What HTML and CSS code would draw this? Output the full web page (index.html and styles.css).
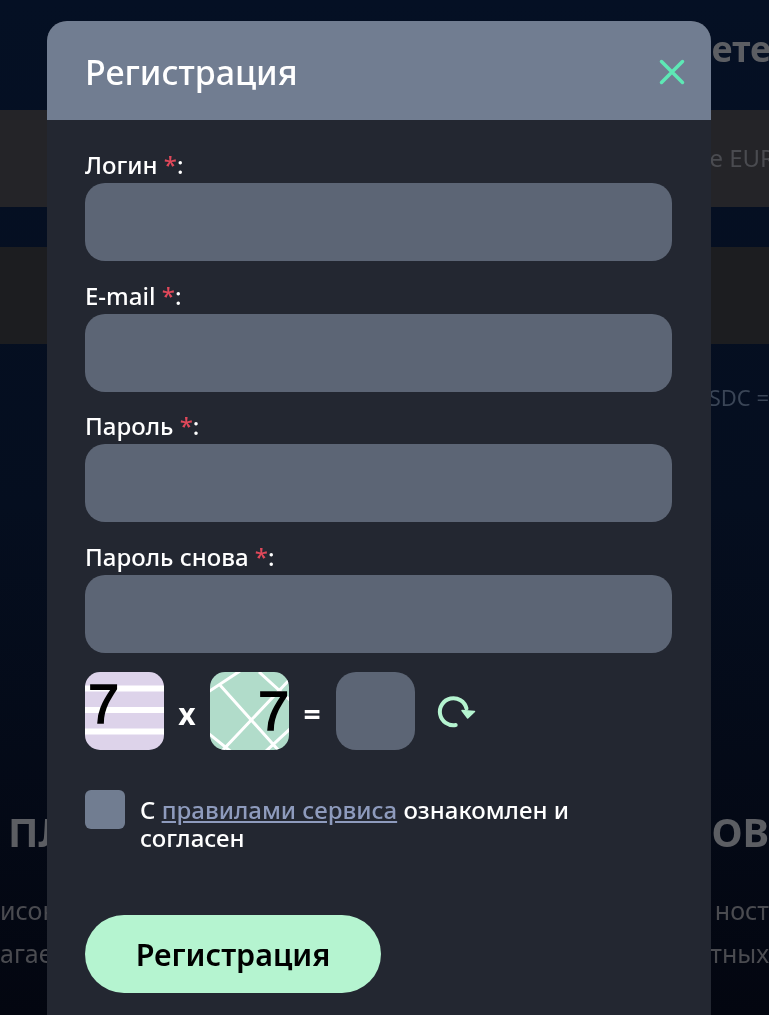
FILE: index.html
```html
<!DOCTYPE html>
<html lang="ru">
<head>
    <meta charset="UTF-8">
    <meta name="viewport" content="width=device-width, initial-scale=1.0">
    <title>Регистрация</title>
    <link rel="stylesheet" href="styles.css">
</head>
<body>
    <!-- Page behind the popup -->
    <div class="page">
        <div class="page-top"><span class="page-top-title">ете</span></div>
        <div class="band band-first"><span>e EUR</span></div>
        <div class="band band-second"></div>
        <div class="rate"><span>SDC =</span></div>
        <div class="page-heading"><span>ПЛА</span><span>ОВ</span></div>
        <div class="page-text"><span>исок</span><span>ност</span></div>
        <div class="page-text"><span>агае</span><span>тных</span></div>
    </div>

    <!-- The Popup -->
    <div class="popup">
        <div class="popup-content">
            <div class="popup-header">
                <h2>Регистрация</h2>
                <svg class="close-icon" width="28" height="28" viewBox="0 0 28 28">
                    <path d="M3.500 3.500L24.500 24.500M24.500 3.500L3.500 24.500" />
                </svg>
            </div>
            <form class="popup-body">
                <label class="field">
                    <span class="field-label">Логин <i>*</i>:</span>
                    <input type="text" class="field-input">
                </label>
                <label class="field">
                    <span class="field-label">E-mail <i>*</i>:</span>
                    <input type="text" class="field-input">
                </label>
                <label class="field">
                    <span class="field-label">Пароль <i>*</i>:</span>
                    <input type="password" class="field-input">
                </label>
                <label class="field">
                    <span class="field-label">Пароль снова <i>*</i>:</span>
                    <input type="password" class="field-input">
                </label>

                <div class="captcha">
                    <svg class="captcha-tile" width="79" height="78" viewBox="0 0 79 78">
                        <rect width="79" height="78" fill="#ddd3ea" />
                        <path d="M0 16.500H79M0 38H79M0 59.500H79" stroke="#fff" stroke-width="6" />
                        <text x="3" y="51" class="captcha-digit">7</text>
                    </svg>
                    <span class="captcha-sign">x</span>
                    <svg class="captcha-tile" width="79" height="78" viewBox="0 0 79 78">
                        <rect width="79" height="78" fill="#b1dcca" />
                        <path d="M-2 20L30 -1M9 12L70 80M11 80L81 6M49 0L81 29M-2 61L24 82M55 80L81 56" stroke="#fff" stroke-width="3" fill="none" />
                        <text x="48" y="58" class="captcha-digit">7</text>
                    </svg>
                    <span class="captcha-sign">=</span>
                    <input type="text" class="captcha-input">
                    <svg class="refresh-icon" width="44" height="44" viewBox="0 0 44 44">
                        <path d="M23.700 36A13.500 13.500 0 1 1 34.500 19.500" fill="none" stroke="#b5f4d0" stroke-width="4" stroke-linecap="round" />
                        <path d="M30 21.500L42.500 22.500L35.700 29Z" fill="#b5f4d0" stroke="#b5f4d0" stroke-width="1.500" stroke-linejoin="round" />
                    </svg>
                </div>

                <label class="rules">
                    <span class="rules-box"></span>
                    <span class="rules-text">С <a href="#">правилами сервиса</a> ознакомлен и согласен</span>
                </label>

                <button type="button" class="submit-button">Регистрация</button>
            </form>
        </div>
    </div>
</body>
</html>
```

FILE: styles.css
```css
html, body {
    height: 100%;
}

body {
    margin: 0;
    overflow: hidden;
    font-family: "Noto Sans", sans-serif;
    background-color: #050f22;
    color: #fff;
}

.page {
    height: 1015px;
    background: linear-gradient(to bottom, #051024, #050e1f 50%, #030610);
    color: #5c5e63;
    overflow: hidden;
    filter: blur(0.6px);
}

.page-top {
    height: 110px;
    display: flex;
    justify-content: flex-end;
    align-items: center;
    padding-bottom: 14px;
    box-sizing: border-box;
}

.page-top-title {
    font-size: 36px;
    font-weight: 700;
    margin-right: -2px;
}

.band {
    height: 97px;
    display: flex;
    justify-content: flex-end;
    align-items: center;
    font-size: 24px;
    color: #4a4b50;
}

.band-first {
    background-color: #242428;
    padding-bottom: 2px;
    box-sizing: border-box;
    margin-bottom: 40px;
    margin-right: -6px;
}

.band-second {
    background-color: #1c1d20;
}

.rate {
    display: flex;
    justify-content: flex-end;
    margin-top: 38px;
    font-size: 22px;
    line-height: 30px;
    color: #3a4556;
}

.page-heading {
    display: flex;
    justify-content: space-between;
    margin-top: 395px;
    padding-left: 8px;
    font-size: 40px;
    line-height: 50px;
    font-weight: 700;
}

.page-text {
    display: flex;
    justify-content: space-between;
    margin-top: 13px;
    font-size: 25px;
    line-height: 30px;
    color: #4a4b50;
}

.page-heading + .page-text {
    margin-top: 38px;
}

/* Popup container */
.popup {
    position: fixed;
    left: 0;
    top: 0;
    width: 100%;
    height: 100%;
    overflow: hidden;
}

/* Popup content */
.popup-content {
    margin: 21px 58px 0 47px;
    background-color: #232731;
    border-radius: 20px 20px 0 0;
    height: 1100px;
    filter: blur(0.4px);
}

.popup-header {
    height: 99px;
    padding: 2px 25px 0 38px;
    box-sizing: border-box;
    display: flex;
    justify-content: space-between;
    align-items: center;
    background-color: #717d91;
    border-radius: 20px 20px 0 0;
}

.popup-header h2 {
    margin: 0;
    font-size: 34px;
    font-weight: 500;
}

.close-icon {
    fill: none;
    stroke: #5ee8b5;
    stroke-width: 3.500;
    stroke-linecap: round;
}

.popup-body {
    padding: 28px 39px 0 38px;
    display: flex;
    flex-direction: column;
    gap: 17.500px;
    align-items: flex-start;
}

.field {
    display: flex;
    flex-direction: column;
    align-self: stretch;
}

.field-label {
    font-size: 24px;
    line-height: 34px;
    margin-bottom: 1px;
    font-weight: 500;
}

.field-label i {
    font-style: normal;
    color: #e0485a;
}

.field-input,
.captcha-input {
    box-sizing: border-box;
    height: 78px;
    border: none;
    background-color: #5c6575;
    border-radius: 20px;
}

.captcha {
    display: flex;
    align-items: center;
    margin-top: 2px;
}

.captcha-tile {
    display: block;
    border-radius: 15px;
}

.captcha-digit {
    font-family: "Liberation Sans", sans-serif;
    font-size: 56px;
    fill: #000;
    stroke: #000;
    stroke-width: 1.500px;
}

.captcha-sign {
    width: 46px;
    text-align: center;
    font-size: 30px;
    line-height: 40px;
    font-weight: 700;
    padding-top: 5px;
}

.captcha-input {
    width: 79px;
    margin-left: 1px;
}

.refresh-icon {
    margin-left: 17px;
}

.rules {
    display: flex;
    align-items: flex-start;
    gap: 15px;
    margin-top: 22px;
    width: 500px;
}

.rules-box {
    flex: none;
    width: 40px;
    height: 39px;
    background-color: #717d91;
    border-radius: 6px;
}

.rules-text {
    padding-top: 6px;
    font-size: 24px;
    line-height: 28px;
    font-weight: 500;
}

.rules-text a {
    color: #8e9bbd;
}

.submit-button {
    margin-top: 46px;
    width: 296px;
    height: 78px;
    border: none;
    border-radius: 39px;
    background-color: #b5f4d0;
    color: #000;
    font-family: inherit;
    font-size: 30.500px;
    font-weight: 600;
}
```
